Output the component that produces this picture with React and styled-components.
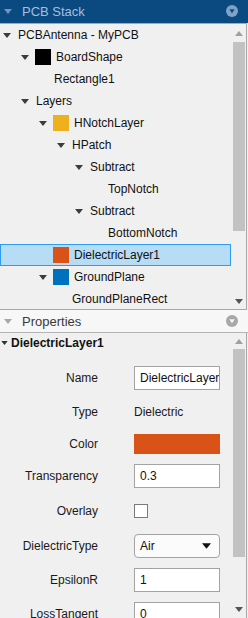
import React from 'react'
import styled, { createGlobalStyle } from 'styled-components'

const Global = createGlobalStyle`
html, body {
  margin: 0;
  padding: 0;
  background: #f0f0f0;
  font-family: "Liberation Sans", Arial, sans-serif;
}
`

const Page = styled.div`
width: 248px;
height: 618px;
display: flex;
flex-direction: column;
overflow: hidden;
background: #f0f0f0;
`

const Header = styled.div`
height: 22px;
flex: none;
display: flex;
align-items: center;
padding: 0 10px 0 4px;
background: ${p => (p.$dark ? '#0b4a80' : '#f7f7f7')};
color: ${p => (p.$dark ? '#a3bfdc' : '#3a3a3a')};
font-size: 13px;
border-bottom: 1px solid ${p => (p.$dark ? '#0b4a80' : '#b4b4b4')};
`

const HeaderTitle = styled.span`
flex: 1;
margin-left: 10px;
`

const Panel = styled.div`
flex: none;
height: ${p => p.$h}px;
display: flex;
border-right: 1px solid #a8a8a8;
border-bottom: 1px solid #a8a8a8;
border-top: ${p => (p.$top ? '1px solid #a8a8a8' : 'none')};
width: 246px;
overflow: hidden;
`

const Content = styled.div`
flex: 1;
overflow: hidden;
`

const ScrollBar = styled.div`
width: 13px;
flex: none;
display: flex;
flex-direction: column;
align-items: center;
margin-right: 1px;
`

const Thumb = styled.div`
width: 12px;
background: #c2c2c2;
height: ${p => p.$h}px;
`

const Spacer = styled.div`
flex: 1;
`

const Row = styled.div`
height: 22px;
display: flex;
align-items: center;
padding-left: ${p => p.$level * 18}px;
font-size: 12px;
color: #111;
white-space: nowrap;
background: ${p => (p.$selected ? '#b7dcf5' : 'transparent')};
outline: ${p => (p.$selected ? '1px solid #2d9cf0' : 'none')};
outline-offset: -1px;
margin-right: ${p => (p.$selected ? 1 : 0)}px;
`

const Toggle = styled.span`
width: 14px;
flex: none;
display: flex;
justify-content: center;
margin-right: 4px;
`

const Swatch = styled.span`
width: 16px;
height: 16px;
flex: none;
background: ${p => p.$color};
margin-left: -1px;
margin-right: 5px;
`

const Caret = ({ color = '#3c3c3c', w = 8, h = 5 }) => (
  <svg width={w} height={h} viewBox="0 0 8 5">
    <path d="M0 0 L8 0 L4 5 Z" fill={color} />
  </svg>
)

const UpArrow = ({ color = '#a0a0a0' }) => (
  <svg width="8" height="5" viewBox="0 0 8 5">
    <path d="M0 5 L8 5 L4 0 Z" fill={color} />
  </svg>
)

const CircleIcon = ({ fill, inner }) => (
  <svg width="12" height="12" viewBox="0 0 12 12">
    <circle cx="6" cy="6" r="6" fill={fill} />
    <path d="M3.3 4.3 L8.7 4.3 L6 8.3 Z" fill={inner} />
  </svg>
)

const Arrow = styled.div`
height: ${p => p.$h || 10}px;
display: flex;
align-items: center;
`

const tree = [
  { level: 0, open: true, text: 'PCBAntenna - MyPCB' },
  { level: 1, open: true, swatch: '#000000', text: 'BoardShape' },
  { level: 2, text: 'Rectangle1' },
  { level: 1, open: true, text: 'Layers' },
  { level: 2, open: true, swatch: '#edb120', text: 'HNotchLayer' },
  { level: 3, open: true, text: 'HPatch' },
  { level: 4, open: true, text: 'Subtract' },
  { level: 5, text: 'TopNotch' },
  { level: 4, open: true, text: 'Subtract' },
  { level: 5, text: 'BottomNotch' },
  { level: 2, swatch: '#d95319', text: 'DielectricLayer1', selected: true },
  { level: 2, open: true, swatch: '#0072bd', text: 'GroundPlane' },
  { level: 3, text: 'GroundPlaneRect' },
]

const TreeRow = ({ item }) => (
  <Row $level={item.level} $selected={item.selected}>
    <Toggle>{item.open && <Caret />}</Toggle>
    {item.swatch && <Swatch $color={item.swatch} />}
    <span>{item.text}</span>
  </Row>
)

const PropTitle = styled.div`
height: 20px;
display: flex;
align-items: center;
font-size: 12px;
font-weight: bold;
color: #111;
padding-left: 1px;
gap: 3px;
`

const Grid = styled.div`
display: grid;
grid-template-columns: 98px 86px;
column-gap: 36px;
row-gap: 10px;
margin-top: 13px;
align-items: center;
`

const Label = styled.div`
text-align: right;
font-size: 12px;
color: #1a1a1a;
white-space: nowrap;
`

const Input = styled.div`
height: ${p => p.$h || 24}px;
box-sizing: border-box;
border: 1px solid #a3a3a3;
background: #fff;
font-size: 12px;
color: #111;
display: flex;
align-items: center;
padding-left: 5px;
white-space: nowrap;
overflow: hidden;
`

const Plain = styled.div`
height: 24px;
display: flex;
align-items: center;
font-size: 12px;
color: #1a1a1a;
`

const ColorBox = styled.div`
height: 20px;
background: ${p => p.$color};
`

const Check = styled.div`
width: 14px;
height: 14px;
box-sizing: border-box;
border: 1px solid #7a7a7a;
background: #fff;
`

const CheckCell = styled.div`
height: 26px;
display: flex;
align-items: center;
`

const Select = styled(Input)`
border-radius: 4px;
background: #fbfbfb;
justify-content: space-between;
padding-right: 8px;
`

const props = [
  { label: 'Name', kind: 'input', value: 'DielectricLayer1' },
  { label: 'Type', kind: 'plain', value: 'Dielectric' },
  { label: 'Color', kind: 'color', value: '#d95319' },
  { label: 'Transparency', kind: 'input', value: '0.3' },
  { label: 'Overlay', kind: 'check' },
  { label: 'DielectricType', kind: 'select', value: 'Air' },
  { label: 'EpsilonR', kind: 'input', value: '1' },
  { label: 'LossTangent', kind: 'input', value: '0' },
]

const Value = ({ p }) => {
  if (p.kind === 'plain') return <Plain>{p.value}</Plain>
  if (p.kind === 'color') return <ColorBox $color={p.value} />
  if (p.kind === 'check') return <CheckCell><Check /></CheckCell>
  if (p.kind === 'select')
    return (
      <Select>
        <span>{p.value}</span>
        <Caret color="#111" w={9} h={8} />
      </Select>
    )
  return <Input>{p.value}</Input>
}

export default function App() {
  return (
    <Page>
      <Global />
      <Header $dark>
        <Caret color="#6f96bf" w={8} h={5} />
        <HeaderTitle>PCB Stack</HeaderTitle>
        <CircleIcon fill="#7fa3c8" inner="#0b4a80" />
      </Header>
      <Panel $h={285} $top>
        <Content>
          {tree.map((item, i) => (
            <TreeRow key={i} item={item} />
          ))}
        </Content>
        <ScrollBar>
          <Arrow $h={18}><UpArrow /></Arrow>
          <Thumb $h={189} />
          <Spacer />
          <Arrow $h={16}><Caret color="#555" w={8} h={5} /></Arrow>
        </ScrollBar>
      </Panel>
      <Header>
        <Caret color="#a8a8a8" w={8} h={5} />
        <HeaderTitle>Properties</HeaderTitle>
        <CircleIcon fill="#a8a8a8" inner="#f7f7f7" />
      </Header>
      <Panel $h={286}>
        <Content>
          <PropTitle>
            <Caret color="#333" w={7} h={4} />
            DielectricLayer1
          </PropTitle>
          <Grid>
            {props.map(p => (
              <React.Fragment key={p.label}>
                <Label>{p.label}</Label>
                <Value p={p} />
              </React.Fragment>
            ))}
          </Grid>
        </Content>
        <ScrollBar>
          <Arrow $h={16}><UpArrow /></Arrow>
          <Thumb $h={208} />
          <Spacer />
          <Arrow $h={20}><Caret color="#555" w={8} h={5} /></Arrow>
        </ScrollBar>
      </Panel>
    </Page>
  )
}
